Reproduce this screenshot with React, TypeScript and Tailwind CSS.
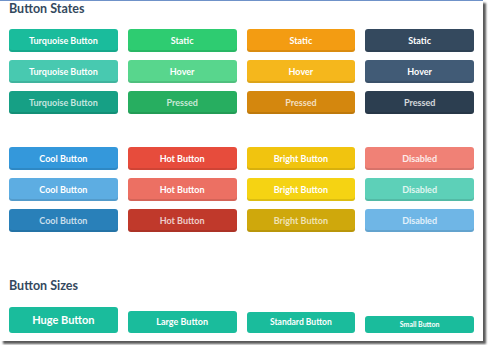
import React from 'react';

type Btn = { label: string; bg: string; text?: string };

const STATES: Btn[][] = [
  [
    { label: 'Turquoise Button', bg: 'bg-[#1abc9c]' },
    { label: 'Static', bg: 'bg-[#2ecc71]' },
    { label: 'Static', bg: 'bg-[#f39c12]' },
    { label: 'Static', bg: 'bg-[#34495e]' },
  ],
  [
    { label: 'Turquoise Button', bg: 'bg-[#48c9b0]' },
    { label: 'Hover', bg: 'bg-[#58d68d]' },
    { label: 'Hover', bg: 'bg-[#f5b71c]' },
    { label: 'Hover', bg: 'bg-[#415b76]' },
  ],
  [
    { label: 'Turquoise Button', bg: 'bg-[#16a085]', text: 'text-white/75' },
    { label: 'Pressed', bg: 'bg-[#27ae60]', text: 'text-white/75' },
    { label: 'Pressed', bg: 'bg-[#d4870e]', text: 'text-white/75' },
    { label: 'Pressed', bg: 'bg-[#2c3e50]', text: 'text-white/80' },
  ],
];

const COLORS: Btn[][] = [
  [
    { label: 'Cool Button', bg: 'bg-[#3498db]' },
    { label: 'Hot Button', bg: 'bg-[#e74c3c]' },
    { label: 'Bright Button', bg: 'bg-[#f1c40f]' },
    { label: 'Disabled', bg: 'bg-[#f08176]', text: 'text-white/85' },
  ],
  [
    { label: 'Cool Button', bg: 'bg-[#5dade2]' },
    { label: 'Hot Button', bg: 'bg-[#ec7063]' },
    { label: 'Bright Button', bg: 'bg-[#f5d313]' },
    { label: 'Disabled', bg: 'bg-[#5dd0b8]', text: 'text-white/80' },
  ],
  [
    { label: 'Cool Button', bg: 'bg-[#2980b9]', text: 'text-white/75' },
    { label: 'Hot Button', bg: 'bg-[#c0392b]', text: 'text-white/75' },
    { label: 'Bright Button', bg: 'bg-[#cfa80c]', text: 'text-white/70' },
    { label: 'Disabled', bg: 'bg-[#6fb6e6]', text: 'text-white/80' },
  ],
];

const Button = ({ b }: { b: Btn }) => (
  <div
    className={`w-[109px] h-[23px] rounded-[3px] flex items-center justify-center text-[9px] font-bold shadow-[inset_0_-2px_0_rgba(0,0,0,0.1)] ${b.bg} ${b.text ?? 'text-white'}`}
  >
    {b.label}
  </div>
);

const Grid = ({ rows }: { rows: Btn[][] }) => (
  <div className="flex flex-col gap-[8px]">
    {rows.map((row, i) => (
      <div key={i} className="flex gap-[10px]">
        {row.map((b, j) => (
          <Button key={j} b={b} />
        ))}
      </div>
    ))}
  </div>
);

export default function App() {
  return (
    <div className="w-[488px] h-[345px] bg-white font-['Lato','Liberation_Sans',sans-serif]">
      <div className="w-[483px] h-[341px] bg-white border-t border-[#6f92c9] shadow-[3px_3px_2px_rgba(0,0,0,0.65)] px-[9px]">
        <h2 className="text-[12.5px] leading-[16px] font-bold text-[#34495e]">Button States</h2>
        <div className="mt-[12px]">
          <Grid rows={STATES} />
        </div>
        <div className="mt-[33px]">
          <Grid rows={COLORS} />
        </div>
        <h2 className="mt-[46px] text-[12.5px] leading-[16px] font-bold text-[#34495e]">Button Sizes</h2>
        <div className="mt-[13px] flex items-end gap-[10px] text-white font-bold">
          <div className="w-[109px] h-[26px] rounded-[3px] bg-[#1abc9c] flex items-center justify-center text-[11px]">
            Huge Button
          </div>
          <div className="w-[109px] h-[22px] rounded-[3px] bg-[#1abc9c] flex items-center justify-center text-[9px]">
            Large Button
          </div>
          <div className="w-[109px] h-[21px] rounded-[3px] bg-[#1abc9c] flex items-center justify-center text-[8.5px]">
            Standard Button
          </div>
          <div className="w-[109px] h-[17px] rounded-[3px] bg-[#1abc9c] flex items-center justify-center text-[7px]">
            Small Button
          </div>
        </div>
      </div>
    </div>
  );
}
